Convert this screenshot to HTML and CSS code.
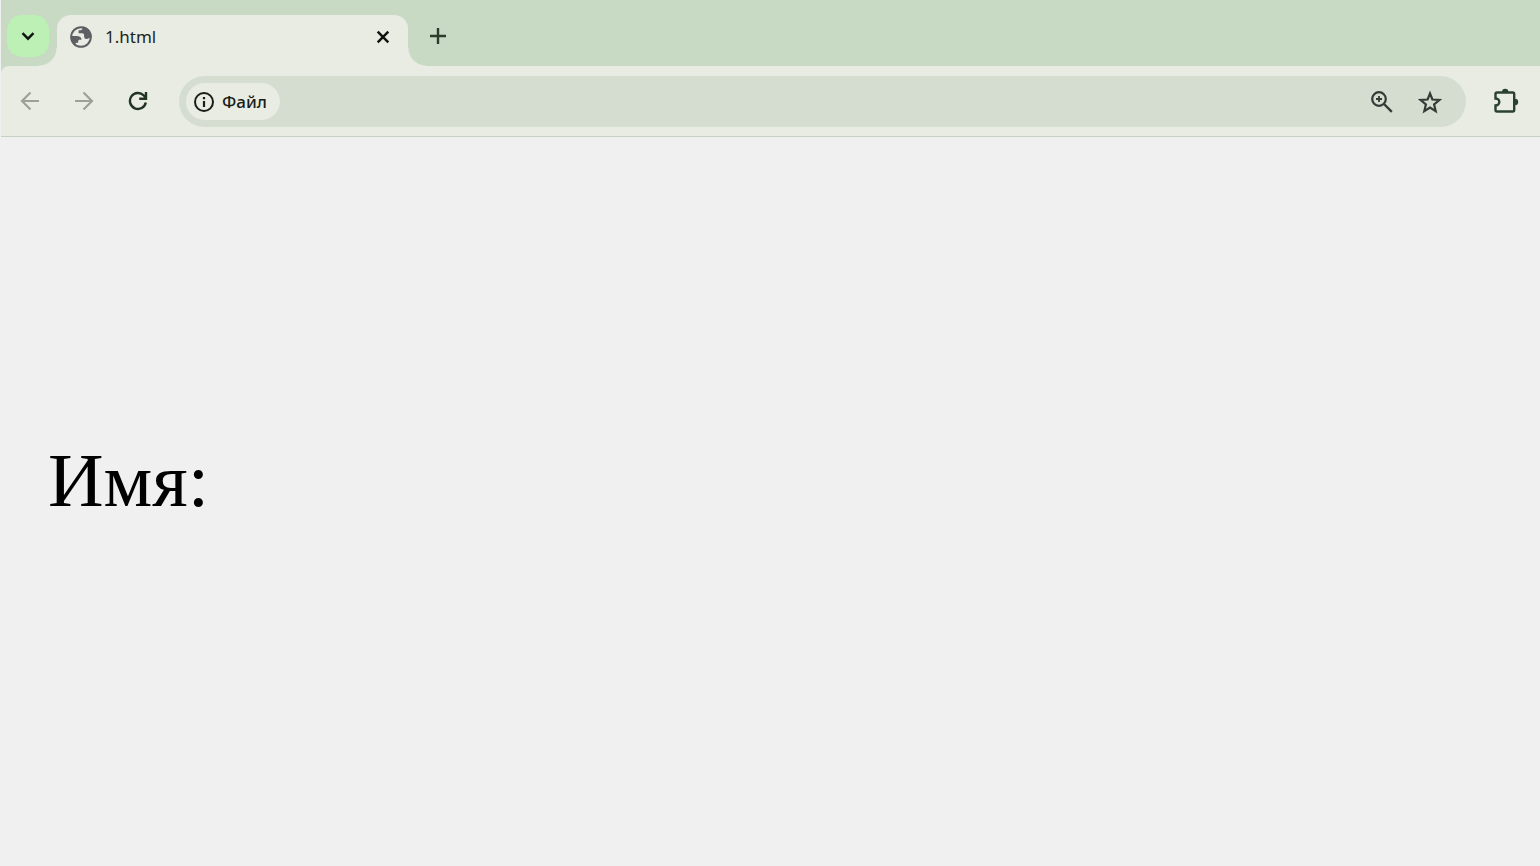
FILE: index.html
```html
<!DOCTYPE html>
<html lang="ru">
<head>
  <meta charset="UTF-8">
  <title>1.html</title>
  <link rel="stylesheet" href="styles.css">
</head>
<body>
  <header class="browser">
    <div class="tabs">
      <button class="tab-search" aria-label="Поиск вкладок">
        <svg width="16" height="16" viewBox="0 0 16 16"><path d="M2.500 5.200 8 10.700l5.500-5.500" stroke-width="2.400"/></svg>
      </button>
      <div class="tab">
        <svg class="globe" width="24" height="24" viewBox="0 0 24 24">
          <circle cx="12" cy="12" r="9.800"/>
          <path d="M13.500 1.500v1.800c0 1.300-.9 2-2.200 2H9.600v3h3.500c1.300 0 2 .8 2 2v1.200c0 1.700 1 2.500 2.500 2.500 1.700 0 2.600-1 5.200-2.200C22.500 6.200 18.800 2 13.500 1.500z"/>
          <path d="M1.500 11h6.300c2.800 0 4.700 1.300 4.700 3.700H10.600c-.9 0-1.400.6-1.400 1.500v1.500H7.800c-1 0-1.400.6-1.400 1.500v1.500C3.300 18.700 1.500 15.500 1.500 11z"/>
        </svg>
        <span class="tab-title">1.html</span>
        <button class="close" aria-label="Закрыть">
          <svg width="16" height="16" viewBox="0 0 16 16"><path d="m2.700 2.700 10.600 10.600M13.300 2.700 2.700 13.300" stroke-width="2.500"/></svg>
        </button>
      </div>
      <button class="new-tab" aria-label="Новая вкладка">
        <svg width="18" height="18" viewBox="0 0 18 18"><path d="M9 1v16M1 9h16" stroke-width="2.400"/></svg>
      </button>
    </div>

    <div class="toolbar">
      <button class="nav" aria-label="Назад" disabled>
        <svg width="20" height="20" viewBox="0 0 20 20"><path d="M19 10H2M10.500 1.500 2 10l8.500 8.500" stroke-width="2.200"/></svg>
      </button>
      <button class="nav" aria-label="Вперёд" disabled>
        <svg width="20" height="20" viewBox="0 0 20 20"><path d="M1 10h17M9.500 1.500 18 10l-8.500 8.500" stroke-width="2.200"/></svg>
      </button>
      <button class="nav" aria-label="Обновить">
        <svg width="20" height="20" viewBox="0 0 20 20"><path d="M17.800 11.500A8 8 0 1 1 15.800 4.500L18 6.800M18 1v6.800h-6.800" stroke-width="2.400"/></svg>
      </button>
      <div class="address">
        <button class="chip">
          <svg width="20" height="20" viewBox="0 0 20 20"><circle cx="10" cy="10" r="9" stroke-width="2"/><path d="M10 9v6M10 5v2.200" stroke-width="2.200"/></svg>
          Файл
        </button>
        <input class="url" type="text" aria-label="Адресная строка">
        <button class="action" aria-label="Масштаб">
          <svg width="22" height="22" viewBox="0 0 22 22"><circle cx="8" cy="8" r="6.800" stroke-width="2.200"/><path d="m13 13 7.800 7.800" stroke-width="2.400"/><path d="M8 5v6M5 8h6" stroke-width="1.800"/></svg>
        </button>
        <button class="action" aria-label="Добавить в закладки">
          <svg width="24" height="24" viewBox="0 0 24 24"><path d="m12 3.500 2.400 6 6.900.5-5.200 4.400 1.600 6.800-5.700-3.600-5.700 3.600 1.600-6.800L2.700 10l6.900-.5z" stroke-width="2.200"/></svg>
        </button>
      </div>
      <button class="extensions" aria-label="Расширения">
        <svg width="26" height="26" viewBox="0 0 26 26"><path d="M4 4.500h15.700c.9 0 1.500.6 1.500 1.500v16c0 .9-.6 1.500-1.500 1.500H4c-.9 0-1.500-.6-1.500-1.500v-4.500c2 0 3.800-1.500 3.800-3.500s-1.800-3.500-3.800-3.500V6c0-.9.6-1.500 1.500-1.500z" stroke-width="2.400"/><path class="solid" d="M9 4a3.200 3.200 0 0 1 6.400 0zM22 10.800a3.200 3.200 0 0 1 0 6.400z"/></svg>
      </button>
    </div>
  </header>

  <main class="page">
    <p class="name">Имя:</p>
  </main>
</body>
</html>
```
FILE: styles.css
```css
* { box-sizing: border-box; }
body { margin: 0; background: #f0f0f0; }
button { display: flex; align-items: center; justify-content: center; padding: 0; border: 0; background: none; color: inherit; }
svg { display: block; flex: none; fill: none; stroke: currentColor; }

.browser { margin-left: 1px; font-family: "Noto Sans", sans-serif; font-size: 17px; color: #1f2320; background: #c8dac4; }

/* tab strip */
.tabs { display: flex; height: 66px; padding: 15px 6px 0; }
.tab-search { width: 42px; height: 42px; border-radius: 15px; background: #bcf0b4; color: #101410; }
.tab { position: relative; display: flex; align-items: center; width: 351px; height: 51px; margin-left: 8px; padding: 0 17px 8px 12px; border-radius: 14px 14px 0 0; background: #e9ece3; }
.tab::before, .tab::after { content: ""; position: absolute; bottom: 0; width: 18px; height: 18px; }
.tab::before { right: 100%; background: radial-gradient(circle at 0 0, transparent 17px, #e9ece3 18px); }
.tab::after { left: 100%; background: radial-gradient(circle at 100% 0, transparent 17px, #e9ece3 18px); }
.tab-title { flex: 1; margin-left: 12px; }
.globe { stroke: none; }
.globe circle { fill: #e9ece3; stroke: #5c6063; stroke-width: 2; }
.globe path { fill: #5c6063; }
.close { color: #101410; }
.new-tab { width: 42px; height: 42px; margin-left: 9px; color: #2b3d2b; }

/* toolbar */
.toolbar { display: flex; align-items: center; height: 71px; padding: 1px 21px 0 19px; border-bottom: 1px solid #c5d1c1; border-radius: 8px 0 0; background: #e9ece3; }
.nav { width: 20px; height: 52px; margin-right: 34px; padding-bottom: 2px; color: #213321; }
.nav:disabled { color: #9ca298; }
.nav:nth-child(3) { margin-right: 31px; }
.address { flex: 1; display: flex; align-items: center; height: 51px; padding: 0 24px 0 7px; border-radius: 26px; background: #d5ddd1; }
.chip { gap: 8px; height: 37px; padding: 0 13px 0 8px; border-radius: 19px; background: #e9ece3; color: #191d19; font: inherit; font-weight: 500; }
.url { flex: 1; min-width: 0; height: 40px; border: 0; outline: 0; background: none; font: inherit; }
.action { margin-left: 25px; color: #343b35; }
.extensions { margin-left: 27px; padding-bottom: 2px; color: #2b412e; }
.extensions .solid { fill: currentColor; stroke: none; }

.page { padding: 299px 48px 0; }
.name { margin: 0; font: 77px "Liberation Serif", serif; color: #000; }
```
